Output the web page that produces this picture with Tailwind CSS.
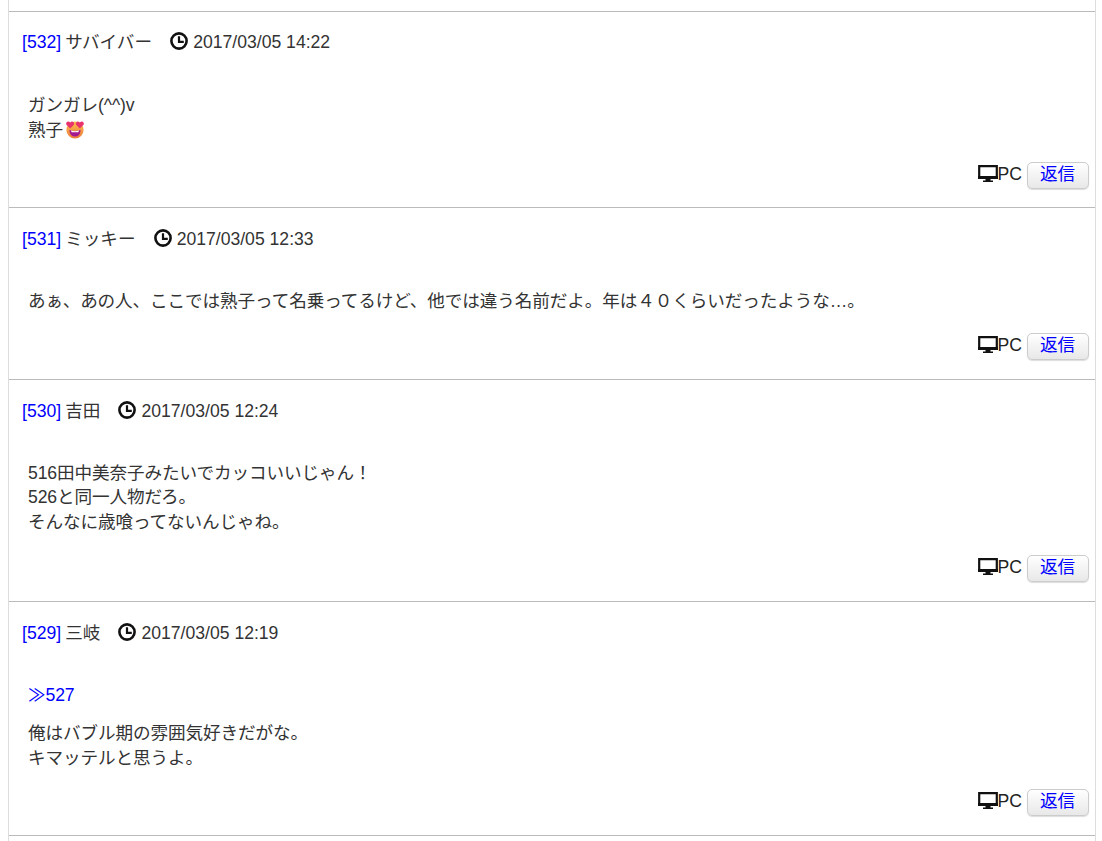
<!DOCTYPE html>
<html lang="ja">
<head>
<meta charset="UTF-8">
<title>掲示板</title>
<script src="https://cdn.jsdelivr.net/npm/@tailwindcss/browser@4"></script>
</head>
<body class="bg-white text-[#333] text-[17.6px] font-['Liberation_Sans','Noto_Sans_CJK_JP',sans-serif] overflow-hidden">
<div class="ml-2 w-[1088px] h-[841px] pt-[11px] border-x border-[#ddd] overflow-hidden">

  <!-- 532 -->
  <article class="border-t border-[#bbb] h-[196px] flex flex-col">
    <div class="flex items-center h-[25px] mt-[18px] pl-[13px]">
      <a class="text-[#0000ff]">[532]</a><span class="ml-[4px]">サバイバー</span>
      <svg class="ml-[18px] mr-[5.1px] -mt-[3px]" width="18" height="18" viewBox="0 0 18 18"><circle cx="9" cy="9" r="7.6" fill="none" stroke="#111" stroke-width="2.6"/><path d="M9 4.2V9.8H13.8" fill="none" stroke="#111" stroke-width="2.2"/></svg>
      <span>2017/03/05 14:22</span>
    </div>
    <div class="mt-[38px] pl-[19px] leading-[24.64px] tracking-[-0.1px]">
      <p>ガンガレ(^^)v<br>熟子<svg class="inline-block ml-[2px] -mt-[1px] align-[-3px]" width="20" height="20" viewBox="0 0 20 20"><defs><linearGradient id="face" x1="0" y1="0" x2="0" y2="1"><stop offset="0" stop-color="#fbc04e"/><stop offset="1" stop-color="#ee7a3a"/></linearGradient></defs><circle cx="10" cy="11" r="8.6" fill="url(#face)"/><path d="M4.4 11Q10 13 15.6 11Q15.2 17.6 10 17.6Q4.8 17.6 4.4 11Z" fill="#a3178f"/><path d="M6 11.6Q10 12.8 14 11.6L13.4 13.2H6.6Z" fill="#fff"/><path d="M5.2 9.6 1.4 5.8C.2 3.8 3 1.2 5.2 3.4 7.4 1.2 10 3.8 8.9 5.8Z" fill="#e8336d"/><path d="M14.8 9.6 11.1 5.8C10 3.8 12.6 1.2 14.8 3.4 17 1.2 19.8 3.8 18.6 5.8Z" fill="#e8336d"/></svg></p>
    </div>
    <footer class="mt-auto mb-[18px] pr-[6px] flex justify-end items-center">
      <svg class="-mt-[3px]" width="20" height="18" viewBox="0 0 20 18"><path d="M1.2 1.2H18.8V12H1.2Z" fill="#fff" stroke="#111" stroke-width="2.2"/><path d="M0 11H20V14H0ZM7.5 14H12.5V15.5H15V17H5V15.5H7.5Z" fill="#111"/></svg>
      <span class="text-[#222] -mt-[3px]">PC</span>
      <button class="ml-[5px] w-[62px] h-[27px] leading-[20px] pb-[3px] pr-[1px] rounded-[5px] border border-[#ccc] bg-linear-to-b from-white to-[#e8e8e8] text-[#0000ff] shadow-[0_1px_1px_#ddd]">返信</button>
    </footer>
  </article>

  <!-- 531 -->
  <article class="border-t border-[#bbb] h-[172px] flex flex-col">
    <div class="flex items-center h-[25px] mt-[19px] pl-[13px]">
      <a class="text-[#0000ff]">[531]</a><span class="ml-[4px]">ミッキー</span>
      <svg class="ml-[18px] mr-[5.1px] -mt-[3px]" width="18" height="18" viewBox="0 0 18 18"><circle cx="9" cy="9" r="7.6" fill="none" stroke="#111" stroke-width="2.6"/><path d="M9 4.2V9.8H13.8" fill="none" stroke="#111" stroke-width="2.2"/></svg>
      <span>2017/03/05 12:33</span>
    </div>
    <div class="mt-[37px] pl-[19px] leading-[24.64px] tracking-[-0.1px]">
      <p>あぁ、あの人、ここでは熟子って名乗ってるけど、他では違う名前だよ。年は４０くらいだったような…。</p>
    </div>
    <footer class="mt-auto mb-[19px] pr-[6px] flex justify-end items-center">
      <svg class="-mt-[3px]" width="20" height="18" viewBox="0 0 20 18"><path d="M1.2 1.2H18.8V12H1.2Z" fill="#fff" stroke="#111" stroke-width="2.2"/><path d="M0 11H20V14H0ZM7.5 14H12.5V15.5H15V17H5V15.5H7.5Z" fill="#111"/></svg>
      <span class="text-[#222] -mt-[3px]">PC</span>
      <button class="ml-[5px] w-[62px] h-[27px] leading-[20px] pb-[3px] pr-[1px] rounded-[5px] border border-[#ccc] bg-linear-to-b from-white to-[#e8e8e8] text-[#0000ff] shadow-[0_1px_1px_#ddd]">返信</button>
    </footer>
  </article>

  <!-- 530 -->
  <article class="border-t border-[#bbb] h-[222px] flex flex-col">
    <div class="flex items-center h-[25px] mt-[19px] pl-[13px]">
      <a class="text-[#0000ff]">[530]</a><span class="ml-[4px]">吉田</span>
      <svg class="ml-[18px] mr-[5.1px] -mt-[3px]" width="18" height="18" viewBox="0 0 18 18"><circle cx="9" cy="9" r="7.6" fill="none" stroke="#111" stroke-width="2.6"/><path d="M9 4.2V9.8H13.8" fill="none" stroke="#111" stroke-width="2.2"/></svg>
      <span>2017/03/05 12:24</span>
    </div>
    <div class="mt-[36.6px] pl-[19px] leading-[24.64px] tracking-[-0.1px]">
      <p>516田中美奈子みたいでカッコいいじゃん！<br>526と同一人物だろ。<br>そんなに歳喰ってないんじゃね。</p>
    </div>
    <footer class="mt-auto mb-[19px] pr-[6px] flex justify-end items-center">
      <svg class="-mt-[3px]" width="20" height="18" viewBox="0 0 20 18"><path d="M1.2 1.2H18.8V12H1.2Z" fill="#fff" stroke="#111" stroke-width="2.2"/><path d="M0 11H20V14H0ZM7.5 14H12.5V15.5H15V17H5V15.5H7.5Z" fill="#111"/></svg>
      <span class="text-[#222] -mt-[3px]">PC</span>
      <button class="ml-[5px] w-[62px] h-[27px] leading-[20px] pb-[3px] pr-[1px] rounded-[5px] border border-[#ccc] bg-linear-to-b from-white to-[#e8e8e8] text-[#0000ff] shadow-[0_1px_1px_#ddd]">返信</button>
    </footer>
  </article>

  <!-- 529 -->
  <article class="border-t border-[#bbb] h-[234px] flex flex-col">
    <div class="flex items-center h-[25px] mt-[19px] pl-[13px]">
      <a class="text-[#0000ff]">[529]</a><span class="ml-[4px]">三岐</span>
      <svg class="ml-[18px] mr-[5.1px] -mt-[3px]" width="18" height="18" viewBox="0 0 18 18"><circle cx="9" cy="9" r="7.6" fill="none" stroke="#111" stroke-width="2.6"/><path d="M9 4.2V9.8H13.8" fill="none" stroke="#111" stroke-width="2.2"/></svg>
      <span>2017/03/05 12:19</span>
    </div>
    <div class="mt-[37px] pl-[19px] leading-[24.64px] tracking-[-0.1px]">
      <p class="text-[#0000ff]">≫527</p>
      <p class="mt-[13.4px]">俺はバブル期の雰囲気好きだがな。<br>キマッテルと思うよ。</p>
    </div>
    <footer class="mt-auto mb-[19px] pr-[6px] flex justify-end items-center">
      <svg class="-mt-[3px]" width="20" height="18" viewBox="0 0 20 18"><path d="M1.2 1.2H18.8V12H1.2Z" fill="#fff" stroke="#111" stroke-width="2.2"/><path d="M0 11H20V14H0ZM7.5 14H12.5V15.5H15V17H5V15.5H7.5Z" fill="#111"/></svg>
      <span class="text-[#222] -mt-[3px]">PC</span>
      <button class="ml-[5px] w-[62px] h-[27px] leading-[20px] pb-[3px] pr-[1px] rounded-[5px] border border-[#ccc] bg-linear-to-b from-white to-[#e8e8e8] text-[#0000ff] shadow-[0_1px_1px_#ddd]">返信</button>
    </footer>
  </article>

  <div class="border-t border-[#bbb]"></div>
</div>
</body>
</html>
